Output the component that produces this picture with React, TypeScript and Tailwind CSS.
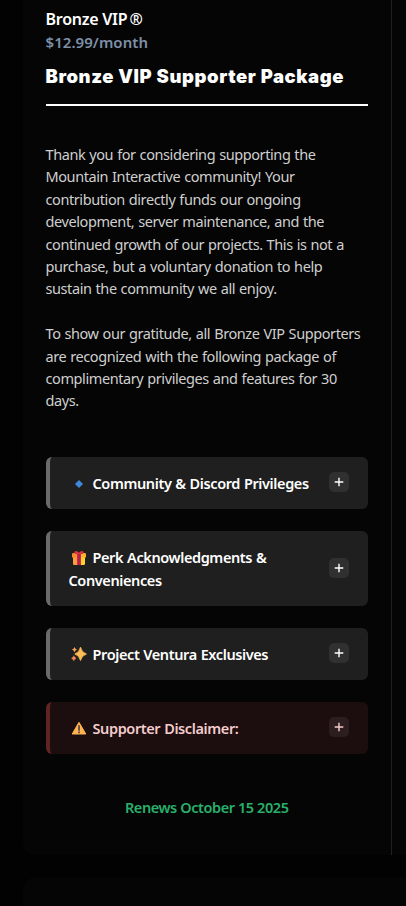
import type { ReactNode } from "react";

const intro = [
  "Thank you for considering supporting the",
  "Mountain Interactive community! Your",
  "contribution directly funds our ongoing",
  "development, server maintenance, and the",
  "continued growth of our projects. This is not a",
  "purchase, but a voluntary donation to help",
  "sustain the community we all enjoy.",
];

const gratitude = [
  "To show our gratitude, all Bronze VIP Supporters",
  "are recognized with the following package of",
  "complimentary privileges and features for 30",
  "days.",
];

function Diamond() {
  return (
    <svg viewBox="0 0 16 16" className="h-4 w-4">
      <path d="M8 4 12 8 8 12 4 8Z" fill="#3f87dc" />
    </svg>
  );
}

function Gift() {
  return (
    <svg viewBox="0 0 16 16" className="h-4 w-4">
      <path d="M2 7h6v8H3.200Q2 15 2 13.800Z" fill="#fb9f38" />
      <path d="M8 7h6v6.800q0 1.200-1.200 1.200H8Z" fill="#fcd22c" />
      <path d="M1 4.200Q1 3 2.200 3H8v4.500H1Z" fill="#f58b2c" />
      <path d="M8 3h5.800Q15 3 15 4.200v3.300H8Z" fill="#f5b52d" />
      <path d="M6 3h4v12H6Z" fill="#d3284c" />
      <path d="M7.300 4h1.400v11H7.300Z" fill="#a91c52" />
      <path d="M7.800 4H4C2.800 2.500 3.500.7 5 .9 6.600 1 7.600 2 8 2.800 8.400 2 9.400 1 11 .9 12.500.7 13.200 2.500 12 4Z" fill="#d9343f" />
    </svg>
  );
}

function Sparkles() {
  return (
    <svg viewBox="0 0 16 16" className="h-4 w-4">
      <path d="M9.500 1.200Q10.800 6.600 15.500 8 10.800 9.400 9.500 14.600 8.200 9.400 3.800 8 8.200 6.600 9.500 1.200Z" fill="#ffbd58" stroke="#ffbd58" strokeWidth=".8" />
      <path d="M3.500 1Q4.200 3 6 3.600 4.200 4.200 3.500 6.200 2.800 4.200 1 3.600 2.800 3 3.500 1Z" fill="#f9a35b" />
      <path d="M2.800 9.700Q3.500 11.600 5.200 12.200 3.500 12.800 2.800 14.800 2.100 12.800.4 12.200 2.100 11.600 2.800 9.700Z" fill="#f58a55" stroke="#f58a55" strokeWidth=".4" />
    </svg>
  );
}

function Warning() {
  return (
    <svg viewBox="0 0 16 16" className="h-4 w-4">
      <path d="M8 2.300 14.800 14H1.200Z" fill="#ffb450" stroke="#ffb450" strokeWidth="1" strokeLinejoin="round" />
      <path d="M7.100 5.200h1.900v5.600H7.100ZM7.100 11.400h1.900v1.800H7.100Z" fill="#664e46" />
    </svg>
  );
}

type PerkProps = {
  icon: ReactNode;
  title: string;
  rest?: string;
  danger?: boolean;
};

function Perk({ icon, title, rest, danger }: PerkProps) {
  return (
    <button
      className={`flex w-full items-center justify-between rounded-md border-l-4 pt-[15px] pb-[14.6px] pr-[19px] pl-[19px] text-left ${
        danger ? "border-[#602424] bg-[#1c0d0e] text-[#f3cccc]" : "border-[#6b6b6b] bg-[#1f1f1f] text-white"
      }`}
    >
      <span className="text-[14.5px] leading-[22.400px] font-semibold tracking-[-0.39px] [word-spacing:0.5px] whitespace-nowrap">
        <span className="flex items-center">
          <span className="mt-px mr-[6px] ml-[2px]">{icon}</span>
          {title}
        </span>
        {rest}
      </span>
      <span
        className={`mb-[2px] flex h-5 w-5 shrink-0 items-center justify-center rounded-[5px] ${
          danger ? "bg-[#2c1d1e]" : "bg-[#303030]"
        }`}
      >
        <svg viewBox="0 0 10 10" className="h-[10px] w-[10px]" stroke="currentColor" strokeWidth="1.4">
          <path d="M5 .7v8.600M.7 5h8.600" />
        </svg>
      </span>
    </button>
  );
}

export default function App() {
  return (
    <main className="h-[906px] overflow-hidden bg-[#020202] pl-[23px] font-['Noto_Sans','Open_Sans',sans-serif]">
      <div className="flex h-[855px] bg-[#020202]">
        <section className="w-[369px] shrink-0 rounded-bl-xl border-r border-[#202020] bg-[#050505] pt-2 pr-[23px] pl-[22.500px]">
          <h2 className="text-[16px] leading-[23px] font-semibold tracking-[-0.25px] text-white">
            Bronze VIP<span className="ml-[2px]">®</span>
          </h2>
          <p className="text-[15px] leading-[23px] font-semibold tracking-[0.05px] text-[#7e90a8]">$12.99/month</p>

          <h1 className="mt-[7px] border-b-2 border-white pb-[13px] font-['Inter',sans-serif] text-[18.5px] leading-[30px] font-black tracking-[0.58px] whitespace-nowrap text-white">
            Bronze VIP Supporter Package
          </h1>

          <div className="mt-[37px] text-[14.5px] leading-[22.400px] tracking-[-0.41px] [word-spacing:0.6px] whitespace-nowrap text-[#cfcfcf]">
            <p>
              {intro.map((line) => (
                <span key={line} className="block">{line}</span>
              ))}
            </p>
            <p className="mt-[22.400px]">
              {gratitude.map((line) => (
                <span key={line} className="block">{line}</span>
              ))}
            </p>
          </div>

          <div className="mt-[45.300px] flex flex-col gap-[22px]">
            <Perk icon={<Diamond />} title="Community & Discord Privileges" />
            <Perk icon={<Gift />} title="Perk Acknowledgments &" rest="Conveniences" />
            <Perk icon={<Sparkles />} title="Project Ventura Exclusives" />
            <Perk icon={<Warning />} title="Supporter Disclaimer:" danger />
          </div>

          <p className="mt-[42px] text-center text-[14.5px] leading-[22.400px] font-semibold tracking-[-0.42px] text-[#29b06a]">
            Renews October 15 2025
          </p>
        </section>
        <div className="grow bg-[#050505]" />
      </div>
      <div className="mt-[22px] h-10 rounded-tl-xl bg-[#050505]" />
    </main>
  );
}
